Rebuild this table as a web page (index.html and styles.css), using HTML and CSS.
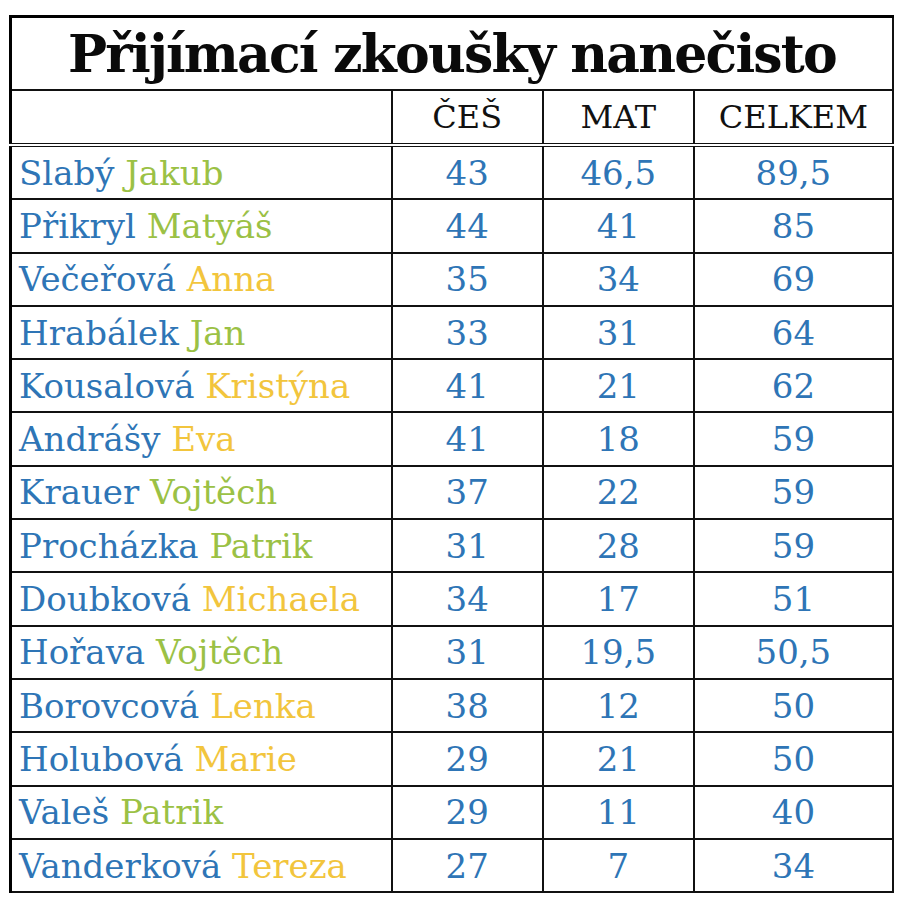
FILE: index.html
```html
<!DOCTYPE html>
<html lang="cs">
<head>
<meta charset="utf-8">
<title>Přijímací zkoušky nanečisto</title>
<link rel="stylesheet" href="styles.css">
</head>
<body>
<div class="page">
<table class="results">
  <colgroup>
    <col class="c-name"><col class="c-num"><col class="c-num"><col class="c-total">
  </colgroup>
  <thead>
    <tr class="title-row"><th colspan="4">Přijímací zkoušky nanečisto</th></tr>
    <tr class="head-row"><th></th><th>ČEŠ</th><th>MAT</th><th>CELKEM</th></tr>
  </thead>
  <tbody>
    <tr><td class="name"><span class="sur">Slabý</span> <span class="boy">Jakub</span></td><td>43</td><td>46,5</td><td>89,5</td></tr>
    <tr><td class="name"><span class="sur">Přikryl</span> <span class="boy">Matyáš</span></td><td>44</td><td>41</td><td>85</td></tr>
    <tr><td class="name"><span class="sur">Večeřová</span> <span class="girl">Anna</span></td><td>35</td><td>34</td><td>69</td></tr>
    <tr><td class="name"><span class="sur">Hrabálek</span> <span class="boy">Jan</span></td><td>33</td><td>31</td><td>64</td></tr>
    <tr><td class="name"><span class="sur">Kousalová</span> <span class="girl">Kristýna</span></td><td>41</td><td>21</td><td>62</td></tr>
    <tr><td class="name"><span class="sur">Andrášy</span> <span class="girl">Eva</span></td><td>41</td><td>18</td><td>59</td></tr>
    <tr><td class="name"><span class="sur">Krauer</span> <span class="boy">Vojtěch</span></td><td>37</td><td>22</td><td>59</td></tr>
    <tr><td class="name"><span class="sur">Procházka</span> <span class="boy">Patrik</span></td><td>31</td><td>28</td><td>59</td></tr>
    <tr><td class="name"><span class="sur">Doubková</span> <span class="girl">Michaela</span></td><td>34</td><td>17</td><td>51</td></tr>
    <tr><td class="name"><span class="sur">Hořava</span> <span class="boy">Vojtěch</span></td><td>31</td><td>19,5</td><td>50,5</td></tr>
    <tr><td class="name"><span class="sur">Borovcová</span> <span class="girl">Lenka</span></td><td>38</td><td>12</td><td>50</td></tr>
    <tr><td class="name"><span class="sur">Holubová</span> <span class="girl">Marie</span></td><td>29</td><td>21</td><td>50</td></tr>
    <tr><td class="name"><span class="sur">Valeš</span> <span class="boy">Patrik</span></td><td>29</td><td>11</td><td>40</td></tr>
    <tr><td class="name"><span class="sur">Vanderková</span> <span class="girl">Tereza</span></td><td>27</td><td>7</td><td>34</td></tr>
  </tbody>
</table>
</div>
</body>
</html>
```
FILE: styles.css
```css
html, body {
  margin: 0;
  padding: 0;
  background: #ffffff;
}
.page {
  padding: 15px 0 0 9px;
}
.results {
  border-collapse: collapse;
  table-layout: fixed;
  width: 885px;
  font-family: "DejaVu Serif", "Liberation Serif", serif;
  border-top: 3px solid #000;
  border-left: 3px solid #000;
  border-right: 2px solid #000;
}
.c-name { width: 381px; }
.c-num { width: 151px; }
.c-total { width: 199px; }
.results th, .results td {
  border: 2px solid #111;
  padding: 0;
}
.title-row th {
  height: 71px;
  font-size: 52px;
  font-weight: bold;
  color: #0a0a0a;
  text-align: center;
  line-height: 1;
  vertical-align: middle;
  letter-spacing: -1.8px;
}
.head-row th {
  height: 52px;
  font-size: 32px;
  font-weight: normal;
  color: #111;
  text-align: center;
  border-bottom: 4px double #111;
}
.results td {
  height: 51.3px;
  font-size: 34px;
  line-height: 1;
  color: #2e75b6;
  text-align: center;
  vertical-align: middle;
}
.results td.name {
  text-align: left;
  padding-left: 7px;
  white-space: nowrap;
}
.sur { color: #2e75b6; }
.boy { color: #9bc145; }
.girl { color: #f2c53d; }
```
